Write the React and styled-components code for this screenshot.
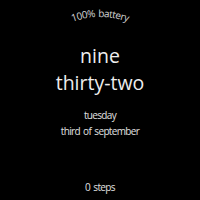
import styled, { createGlobalStyle } from "styled-components";

const Global = createGlobalStyle`
  html, body {
    margin: 0;
    padding: 0;
    background: #000;
  }
`;

const Face = styled.div`
  width: 200px;
  height: 200px;
  background: #000;
  color: #e8e8e8;
  font-family: "Open Sans", sans-serif;
  display: flex;
  flex-direction: column;
  align-items: center;
  overflow: hidden;
`;

const Arc = styled.svg`
  display: block;
  width: 200px;
  height: 30px;
  flex-shrink: 0;
  overflow: visible;
`;

const Time = styled.div`
  margin-top: 12px;
  font-size: 19.5px;
  line-height: 27px;
  text-align: center;
  color: #eeeeee;
`;

const Small = styled.div`
  font-size: 10px;
  line-height: 16px;
  letter-spacing: -0.65px;
  word-spacing: 1.2px;
  text-align: center;
  color: #e0e0e0;
`;

const DateBlock = styled(Small)`
  margin-top: 11px;
`;

const Steps = styled(Small)`
  margin-top: auto;
  margin-bottom: 5px;
`;

const App = () => {
  return (
    <>
      <Global />
      <Face>
        <Arc viewBox="0 0 200 30">
          <defs>
            <path id="top-arc" d="M 30.7 57 A 80 80 0 0 1 169.3 57" />
          </defs>
          <text
            fill="#d4d4d4"
            fontSize="10"
            letterSpacing="-0.55"
            wordSpacing="1"
            fontFamily="Open Sans, sans-serif"
          >
            <textPath href="#top-arc" startOffset="50%" textAnchor="middle">
              100% battery
            </textPath>
          </text>
        </Arc>
        <Time>
          <div>nine</div>
          <div>thirty-two</div>
        </Time>
        <DateBlock>
          <div>tuesday</div>
          <div>third of september</div>
        </DateBlock>
        <Steps>0 steps</Steps>
      </Face>
    </>
  );
};

export default App;
